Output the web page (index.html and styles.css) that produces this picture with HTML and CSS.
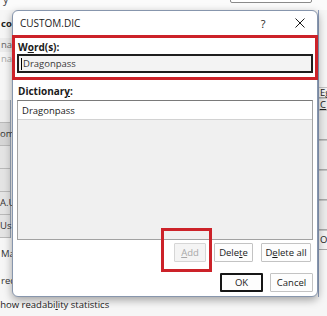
FILE: index.html
```html
<!DOCTYPE html>
<html lang="en">
<head>
    <meta charset="UTF-8">
    <meta name="viewport" content="width=device-width, initial-scale=1.0">
    <title>CUSTOM.DIC</title>
    <link rel="stylesheet" href="styles.css">
</head>
<body>
    <!-- Word Options window, mostly hidden behind the dialog -->
    <div class="backdrop">
        <div class="bd-top">
            <span class="bd-glyph">y</span>
            <span class="bd-field"></span>
        </div>
        <div class="bd-main">
            <div class="side side-left">
                <div class="s-row s-bold">co</div>
                <div class="s-row s-grey">na</div>
                <div class="s-row s-faint">na</div>
                <div class="s-cells">
                    <div class="s-cell"></div>
                    <div class="s-cell s-dark">om</div>
                    <div class="s-cell"></div>
                    <div class="s-cell"></div>
                    <div class="s-cell">A.Us</div>
                    <div class="s-cell">Us</div>
                </div>
                <div class="s-row s-plain">Mai</div>
                <div class="s-row s-plain">rec</div>
            </div>
            <div class="side side-right">
                <div class="r-cell r-first">Eg</div>
                <div class="r-cell r-small"><u>C</u></div>
                <div class="r-cell"></div>
                <div class="r-cell"></div>
                <div class="r-cell"></div>
                <div class="r-cell"></div>
                <div class="r-cell r-ok">OK</div>
            </div>
        </div>
        <div class="bd-bottom">Show readabi<u>l</u>ity statistics</div>
    </div>

    <div class="dialog">
        <div class="titlebar">
            <span class="title">CUSTOM.DIC</span>
            <span class="tb-help">?</span>
            <span class="tb-close">
                <svg width="10" height="10" viewBox="0 0 10 10">
                    <path d="M0.5 0.5 L9.5 9.5 M9.5 0.5 L0.5 9.5" stroke="#1a1a1a" stroke-width="1"/>
                </svg>
            </span>
        </div>

        <div class="words">
            <div class="lbl">W<u>o</u>rd(s):</div>
            <div class="field"><span class="caret"></span>Dragonpass</div>
        </div>

        <div class="dict">
            <div class="lbl">Dictionar<u>y</u>:</div>
            <div class="listbox">
                <div class="item">Dragonpass</div>
            </div>
        </div>

        <div class="btn-row row-edit">
            <button class="btn btn-add" disabled><u>A</u>dd</button>
            <button class="btn btn-del">Dele<u>t</u>e</button>
            <button class="btn btn-delall">D<u>e</u>lete all</button>
        </div>
        <div class="btn-row row-confirm">
            <button class="btn btn-ok">OK</button>
            <button class="btn btn-cancel">Cancel</button>
        </div>

        <!-- annotation box round the Add button -->
        <div class="hilite"></div>
    </div>
</body>
</html>
```

FILE: styles.css
```css
* {
    box-sizing: border-box;
}

body {
    margin: 0;
    width: 327px;
    height: 316px;
    overflow: hidden;
    position: relative;
    background: #f6f6f6;
    font-family: "Segoe UI", "Open Sans", sans-serif;
    font-size: 9.5px;
    color: #1a1a1a;
}

/* ---------- backdrop window ---------- */
.backdrop {
    display: flex;
    flex-direction: column;
    height: 316px;
}

.bd-top {
    height: 10px;
    position: relative;
    background: #fbfbfb;
    overflow: hidden;
}

.bd-glyph {
    position: absolute;
    left: 3px;
    top: -9px;
    font-size: 11px;
    color: #444;
}

.bd-field {
    position: absolute;
    left: 230px;
    top: -10px;
    width: 82px;
    height: 13px;
    border: 1px solid #8a8a8a;
    border-radius: 2px;
    background: #fff;
}

.bd-main {
    flex: 1;
    display: flex;
    justify-content: space-between;
}

.side {
    display: flex;
    flex-direction: column;
    white-space: nowrap;
    overflow: hidden;
}

.side-left {
    width: 40px;
    padding-top: 7px;
}

.s-row {
    height: 14px;
    line-height: 14px;
    padding-left: 1px;
}

.s-bold {
    font-weight: bold;
    color: #222;
}

.s-grey {
    margin-top: 7px;
    background: #ececec;
    color: #666;
}

.s-faint {
    color: #a8a8a8;
}

.s-cells {
    margin-top: 34px;
    width: 11px;
    border-right: 1px solid #9aa6b8;
    display: flex;
    flex-direction: column;
}

.s-cell {
    height: 23px;
    line-height: 22px;
    background: #e4e4e4;
    border-bottom: 1px solid #b9b9b9;
    color: #333;
}

.s-cell:first-child {
    background: #ededed;
}

.s-dark {
    background: #d6d6d6;
}

.s-plain {
    margin-top: 5px;
    height: 22px;
    line-height: 22px;
    color: #333;
}

.side-right {
    width: 9px;
    padding-top: 77px;
    border-left: 1px solid #8e9fbf;
}

.r-cell {
    height: 30px;
    line-height: 20px;
    padding-left: 1px;
    background: #ebebeb;
    border-top: 1px solid #c4c4c4;
    border-bottom: 1px solid #a9a9a9;
    color: #222;
}

.r-first {
    height: 11px;
    line-height: 10px;
    background: #f3f3f3;
}

.r-small {
    height: 12px;
    line-height: 11px;
}

.r-ok {
    height: 20px;
    line-height: 18px;
    background: #f3f3f3;
}

.bd-bottom {
    height: 19px;
    line-height: 16px;
    margin-left: -5px;
    white-space: nowrap;
    color: #222;
}

/* ---------- dialog ---------- */
.dialog {
    position: absolute;
    left: 12px;
    top: 10px;
    width: 306px;
    height: 287px;
    background: #fff;
    border: 1px solid #8796ad;
    border-radius: 6px;
    box-shadow: 0 3px 9px rgba(0, 0, 0, 0.35);
    display: flex;
    flex-direction: column;
}

.titlebar {
    height: 24px;
    display: flex;
    align-items: center;
    padding: 0 8px 0 7px;
}

.title {
    flex: 1;
    font-size: 10px;
}

.tb-help {
    width: 14px;
    text-align: center;
    font-size: 11px;
}

.tb-close {
    width: 18px;
    margin-left: 21px;
    display: flex;
    justify-content: center;
}

.lbl {
    height: 12px;
    line-height: 12px;
    font-size: 10px;
    font-weight: bold;
}

.words {
    height: 45px;
    margin: 0 -1px;
    border: 3px solid #cc2229;
    padding: 3px 2px 0;
}

.words .lbl {
    padding-left: 1px;
}

.field {
    height: 19px;
    margin-top: 1px;
    border: 2px solid #1e1e1e;
    background: #f3f3f3;
    display: flex;
    align-items: center;
    padding-left: 2px;
    color: #3a3a3a;
}

.caret {
    width: 1px;
    height: 12px;
    background: #000;
    margin-right: 1px;
}

.dict {
    padding: 5px 4px 0;
}

.dict .lbl {
    padding-left: 1px;
}

.listbox {
    height: 140px;
    margin-top: 3px;
    background: #f0f0f0;
    border: 1px solid #a2a2a2;
    border-top-color: #7a7a7a;
}

.item {
    height: 19px;
    line-height: 19px;
    padding-left: 4px;
    background: #fff;
    border-bottom: 1px solid #d2d2d2;
}

.btn-row {
    display: flex;
    justify-content: flex-end;
}

.row-edit {
    margin-top: 3px;
    padding-right: 6px;
    gap: 8px;
}

.row-confirm {
    margin-top: 11px;
    padding-right: 4px;
    gap: 7px;
}

.btn {
    height: 19px;
    padding: 0;
    font-family: inherit;
    font-size: 9.5px;
    color: #1a1a1a;
    background: #fdfdfd;
    border: 1px solid #c3c3c3;
    border-radius: 1px;
}

.btn-add {
    width: 32px;
    color: #a8a8a8;
    background: #f4f4f4;
    border-color: #d6d6d6;
}

.btn-del {
    width: 39px;
}

.btn-delall {
    width: 50px;
}

.btn-ok,
.btn-cancel {
    width: 43px;
}

.btn-ok {
    border: 2px solid #161616;
}

.hilite {
    position: absolute;
    left: 148px;
    top: 217px;
    width: 51px;
    height: 44px;
    border: 3px solid #cc2229;
    pointer-events: none;
}
```
